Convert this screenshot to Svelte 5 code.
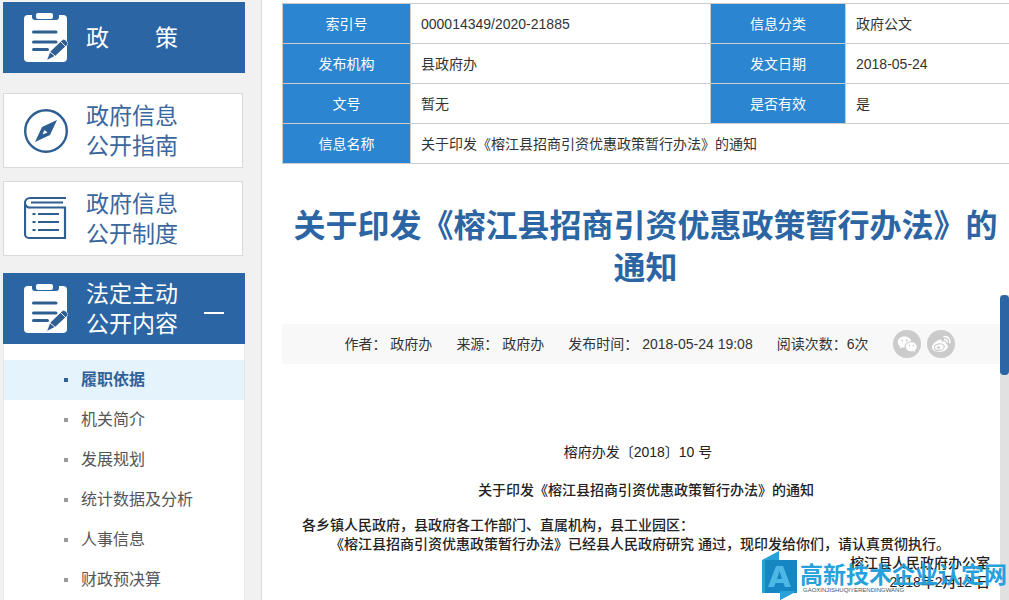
<script>
	const menu = [
		'履职依据',
		'机关简介',
		'发展规划',
		'统计数据及分析',
		'人事信息',
		'财政预决算'
	];

	const meta = [
		['作者：', '政府办'],
		['来源：', '政府办'],
		['发布时间：', '2018-05-24 19:08']
	];

	let current = $state(0);
	let open = $state(true);
</script>

{#snippet clipboard()}
	<svg class="icon" viewBox="0 0 44 50" aria-hidden="true">
		<path fill="#fff" d="M4 2h35a4 4 0 0 1 4 4v39a4 4 0 0 1-4 4H4a4 4 0 0 1-4-4V6a4 4 0 0 1 4-4z" />
		<path fill="#2c65a3" d="M8 1h27v3a3 3 0 0 1-3 3H11a3 3 0 0 1-3-3z" />
		<rect x="12" y="0" width="17" height="6" rx="2" fill="#fff" />
		<path stroke="#2f5f92" stroke-width="3" stroke-linecap="round" d="M9.500 19h22.500M9.500 29h22.500M9.500 36.500h14" />
		<path fill="#2f5f92" stroke="#fff" stroke-width=".8" d="M22.500 47.500l3.500-9L38 27a2.500 2.500 0 0 1 3.200-.2l2.300 2.200a2 2 0 0 1 0 2.800L31.500 43z" />
		<path stroke="#fff" stroke-width=".9" d="M36.500 28.500l5.500 5.500M26 39l5 4" />
	</svg>
{/snippet}

<div class="page">
	<aside>
		<a class="block" href="#policy">
			{@render clipboard()}
			<span>政&#12288;&#12288;策</span>
		</a>

		<a class="card guide" href="#guide">
			<svg class="icon" viewBox="0 0 44 50" fill="none" aria-hidden="true">
				<circle cx="22" cy="25" r="20.800" stroke="#2f5f92" stroke-width="2.400" />
				<path fill="#2f5f92" fill-rule="evenodd" d="M33 14L26 29 11 36 18 21zM20.500 24l-2 4.500 5-2z" />
			</svg>
			<span>政府信息<br />公开指南</span>
		</a>

		<a class="card rules" href="#rules">
			<svg class="icon" viewBox="0 0 44 50" fill="none" stroke="#2f5f92" stroke-width="2.200" aria-hidden="true">
				<path d="M42 4H6a5 5 0 0 0-5 5V40a4 4 0 0 0 4 4h36V13.500H6a4.500 4.500 0 0 1-5-4.500" />
				<path d="M7 8.500h32M14 20h21M14 28h21M14 36h21M8.500 20h3M8.500 28h3M8.500 36h3" />
			</svg>
			<span>政府信息<br />公开制度</span>
		</a>

		<button class="block" aria-expanded={open} onclick={() => (open = !open)}>
			{@render clipboard()}
			<span>法定主动<br />公开内容</span>
			<i class="sign"></i>
		</button>

		{#if open}
			<ul>
				{#each menu as item, i}
					<li class:active={current === i}>
						<a href="#menu{i}" onclick={() => (current = i)}>{item}</a>
					</li>
				{/each}
			</ul>
		{/if}
	</aside>

	<main>
		<table>
			<tbody>
				<tr>
					<th class="first">索引号</th>
					<td class="wide">000014349/2020-21885</td>
					<th class="second">信息分类</th>
					<td>政府公文</td>
				</tr>
				<tr>
					<th>发布机构</th>
					<td>县政府办</td>
					<th>发文日期</th>
					<td>2018-05-24</td>
				</tr>
				<tr>
					<th>文号</th>
					<td>暂无</td>
					<th>是否有效</th>
					<td>是</td>
				</tr>
				<tr>
					<th>信息名称</th>
					<td colspan="3">关于印发《榕江县招商引资优惠政策暂行办法》的通知</td>
				</tr>
			</tbody>
		</table>

		<h1>关于印发《榕江县招商引资优惠政策暂行办法》的通知</h1>

		<div class="meta">
			{#each meta as [label, value]}
				<span>{label} {value}</span>
			{/each}
			<span>阅读次数：6次</span>
			<div class="share">
				<button aria-label="微信">
					<svg viewBox="0 0 28 28" aria-hidden="true">
						<circle cx="14" cy="14" r="14" fill="#cbcbcb" />
						<path fill="#fff" d="M11.500 6.500c-4 0-6.800 2.500-6.800 5.600 0 1.800.9 3.300 2.400 4.300l-.6 2.200 2.500-1.300c.8.200 1.600.3 2.500.3 0-4 3-6.300 6.800-6.300-.5-2.800-3.300-4.800-6.800-4.800z" />
						<path fill="#fff" d="M18.300 12.200c-3.100 0-5.500 2-5.500 4.500s2.400 4.500 5.500 4.500c.7 0 1.300-.1 1.900-.3l2 1.100-.5-1.800c1.300-.8 2.100-2.100 2.100-3.500 0-2.500-2.400-4.500-5.500-4.500z" />
						<g fill="#cbcbcb">
							<circle cx="9.200" cy="10.500" r=".9" />
							<circle cx="13.700" cy="10.500" r=".9" />
							<circle cx="16.500" cy="15.500" r=".8" />
							<circle cx="20.200" cy="15.500" r=".8" />
						</g>
					</svg>
				</button>
				<button aria-label="微博">
					<svg viewBox="0 0 28 28" fill="none" aria-hidden="true">
						<circle cx="14" cy="14" r="14" fill="#cbcbcb" />
						<path fill="#fff" d="M18.500 13.500c.8-2-.6-2.800-3.800-1.600.6-2.300-.7-3-3.200-1.900C8 11.600 5 14.800 5 17.300 5 20 8.400 22 12.300 22c5 0 8.700-2.800 8.700-5.400 0-1.600-1.100-2.600-2.500-3.100z" />
						<ellipse cx="12.300" cy="17.200" rx="5" ry="3.300" transform="rotate(-10 12.300 17.200)" stroke="#cbcbcb" stroke-width="1.200" />
						<circle cx="11.500" cy="17.700" r="1.400" fill="#cbcbcb" />
						<path stroke="#fff" stroke-width="1.500" stroke-linecap="round" d="M17 6.800c3.800-.9 6.700 2.200 5.700 6M17.600 9.600c1.700-.3 2.900.9 2.500 2.600" />
					</svg>
				</button>
			</div>
		</div>

		<article>
			<p class="number">榕府办发〔2018〕10 号</p>
			<p class="subject">关于印发《榕江县招商引资优惠政策暂行办法》的通知</p>
			<p>各乡镇人民政府，县政府各工作部门、直属机构，县工业园区：</p>
			<p class="indent">《榕江县招商引资优惠政策暂行办法》已经县人民政府研究 通过，现印发给你们，请认真贯彻执行。</p>
			<p class="sign-off">榕江县人民政府办公室</p>
			<p class="sign-off">2018年2月12 日</p>
		</article>
	</main>

	<div class="scroll"><div class="thumb"></div></div>

	<div class="watermark">
		<svg viewBox="0 0 35 49" aria-hidden="true">
			<path fill="#2aa0d8" d="M0 9L17 0v9l18 31-17 9v-7H0z" />
			<path fill="#1686c2" d="M1 9h34v33H1z" />
			<path fill="#2aa0d8" d="M0 9h3v33H0zM18 40h17l-17 9z" />
			<path fill="#4db8e6" fill-rule="evenodd" d="M14 15h7l8 21h-6l-1.500-4h-8L12 36H6zM17.500 20L15 28h5z" />
		</svg>
		<div>
			<strong>高新技术企业认定网</strong>
			<small>GAOXINJISHUQIYERENDINGWANG</small>
		</div>
	</div>
</div>

<style>
	:global(body) {
		margin: 0;
		background: #f1f1f1;
	}
	.page {
		position: relative;
		display: flex;
		height: 100vh;
		overflow: hidden;
		font: 14px/20px "Liberation Sans", "Noto Sans CJK SC", sans-serif;
		color: #333;
	}
	a {
		color: inherit;
		text-decoration: none;
	}
	button {
		border: 0;
		padding: 0;
		background: none;
		font-family: inherit;
		cursor: pointer;
	}

	/* left column */
	aside {
		flex: none;
		width: 242px;
		padding: 2px 16px 0 3px;
	}
	.block,
	.card {
		box-sizing: border-box;
		display: flex;
		align-items: center;
		gap: 18px;
		padding-left: 21px;
		font-size: 23px;
		line-height: 30px;
		text-align: left;
	}
	.block {
		width: 100%;
		height: 71px;
		background: #2c65a3;
		color: #fff;
	}
	.card {
		width: 240px;
		height: 75px;
		padding-left: 20px;
		border: 1px solid #d9d9d9;
		background: #fff;
		color: #3a679f;
	}
	.guide {
		margin-top: 20px;
	}
	.rules {
		margin: 13px 0 17px;
	}
	.icon {
		flex: none;
		width: 44px;
		height: 50px;
	}
	.sign {
		width: 20px;
		height: 2px;
		margin: 8px 0 0 8px;
		background: #fff;
	}
	ul {
		margin: 0;
		padding: 16px 0 0;
		border: 1px solid #e5e5e5;
		border-top: 0;
		background: #fff;
		list-style: none;
	}
	li a {
		display: flex;
		align-items: center;
		gap: 13px;
		padding-left: 60px;
		font-size: 16px;
		line-height: 40px;
		color: #555;
	}
	li a::before {
		content: "";
		width: 4px;
		height: 4px;
		background: #999;
	}
	.active a {
		background: #e5f3fd;
		color: #2f6299;
		font-weight: bold;
	}
	.active a::before {
		background: #2f6299;
	}

	/* right column */
	main {
		flex: 1;
		min-width: 0;
		padding: 3px 0 0 20px;
		border-left: 1px solid #dcdcdc;
		background: #fff;
	}
	table {
		width: 100%;
		border-collapse: collapse;
		table-layout: fixed;
	}
	th,
	td {
		box-sizing: border-box;
		height: 40px;
		padding: 0 10px;
		border: 1px solid #ccc;
		border-right: 0;
		text-align: left;
	}
	th {
		background: #2b85d0;
		color: #fff;
		font-weight: normal;
		text-align: center;
	}
	.first {
		width: 128px;
	}
	.wide {
		width: 300px;
	}
	.second {
		width: 135px;
	}
	h1 {
		margin: 41px 0 0;
		padding: 0 8px;
		color: #2c65a3;
		font-size: 32px;
		line-height: 42px;
		text-align: center;
	}
	.meta {
		display: flex;
		align-items: center;
		justify-content: center;
		gap: 24px;
		height: 40px;
		margin-top: 35px;
		padding-left: 8px;
		background: #f8f8f8;
		white-space: nowrap;
	}
	.share {
		display: flex;
		gap: 6px;
	}
	.share button,
	.share svg {
		display: block;
		width: 28px;
		height: 28px;
	}
	article {
		padding: 79px 19px 0 20px;
		font-weight: 500;
		line-height: 19px;
		color: #222;
	}
	p {
		margin: 0;
	}
	.number {
		padding-right: 16px;
		font-weight: normal;
		text-align: center;
	}
	.subject {
		margin: 19px 0 16px;
		text-align: center;
	}
	.indent {
		text-indent: 28px;
	}
	.sign-off {
		text-align: right;
	}

	.scroll {
		position: absolute;
		top: 295px;
		right: 0;
		bottom: 0;
		width: 9px;
		background: #e1e1e1;
	}
	.thumb {
		height: 80px;
		border-radius: 4px;
		background: #2c65a3;
	}

	/* site mark over the bottom right corner */
	.watermark {
		position: absolute;
		right: 2px;
		bottom: 0;
		display: flex;
		gap: 3px;
		color: #27a0de;
	}
	.watermark svg {
		width: 35px;
		height: 49px;
	}
	.watermark strong,
	.watermark small {
		display: block;
	}
	.watermark strong {
		padding-top: 12px;
		font-size: 23px;
		line-height: 24px;
	}
	.watermark small {
		padding-left: 3px;
		font-size: 6px;
		line-height: 6px;
		color: #456;
	}
</style>
